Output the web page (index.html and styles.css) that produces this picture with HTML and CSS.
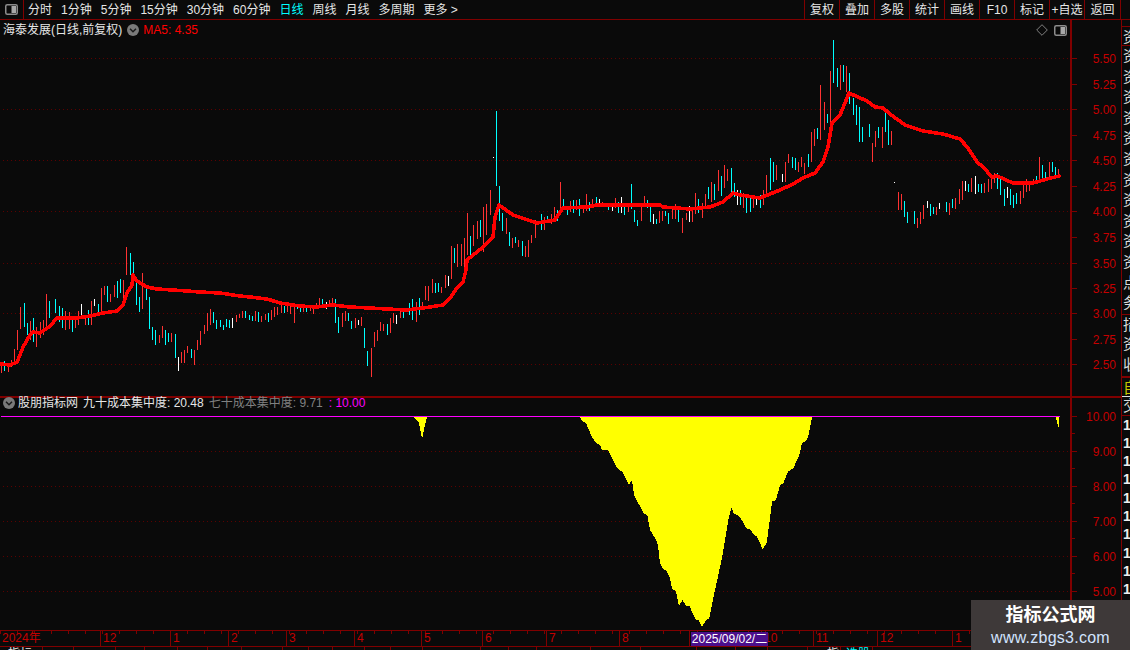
FILE: index.html
```html
<!DOCTYPE html>
<html lang="zh-CN">
<head>
<meta charset="utf-8">
<title>海泰发展</title>
<link rel="stylesheet" href="styles.css">
</head>
<body>
<div class="app">
  <header class="toolbar">
    <div class="layout-btn">
      <svg class="panel-icon" width="13" height="11" viewBox="0 0 13 11"><rect x=".75" y=".75" width="11.5" height="9.5" rx="1.5" class="pi-box"/><rect x="6.5" y="2" width="4.5" height="7" class="pi-fill"/></svg>
    </div>
    <nav class="periods">
      <span>分时</span><span>1分钟</span><span>5分钟</span><span>15分钟</span><span>30分钟</span><span>60分钟</span><span class="active">日线</span><span>周线</span><span>月线</span><span>多周期</span><span>更多 &gt;</span>
    </nav>
    <div class="actions">
      <span>复权</span><span>叠加</span><span>多股</span><span>统计</span><span>画线</span><span>F10</span><span>标记</span><span>+自选</span><span class="wide">返回</span>
    </div>
  </header>

  <div class="workspace">
    <main class="charts">
      <section class="pane pane-price">
        <div class="legend">
          <span class="name">海泰发展(日线,前复权)</span>
          <svg class="chev" width="12" height="12" viewBox="0 0 12 12"><circle cx="6" cy="6" r="6" class="chev-bg"/><path d="M3 4.8l3 3 3-3" class="chev-line"/></svg>
          <span class="ma">MA5: 4.35</span>
        </div>
        <div class="pane-tools">
          <svg width="12" height="12" viewBox="0 0 12 12"><path d="M6 .7L11.3 6 6 11.3.7 6z" class="diamond"/></svg>
          <svg class="panel-icon" width="13" height="11" viewBox="0 0 13 11"><rect x=".75" y=".75" width="11.5" height="9.5" rx="1.5" class="pi-box"/><rect x="6.5" y="2" width="4.5" height="7" class="pi-fill"/></svg>
        </div>
        <svg class="plot" width="1121" height="376" viewBox="0 20 1121 376">
          <path class="grid" d="M3 58.5H1068M3 109.5H1068M3 160.5H1068M3 211.5H1068M3 263.5H1068M3 313.5H1068M3 364.5H1068"/>
          <g transform="translate(0 240) scale(.33333)">
            <path class="c-red" d="M4 365V400M25 368V395M35 360V382M44 328V368M52 270V330M61 202V268M91 243V300M109 262V322M122 247V295M130 240V285M139 162V257M196 213V270M208 215V268M226 235V265M236 212V255M256 232V255M274 182V255M304 145V213M313 138V165M331 162V185M343 135V170M370 120V180M379 22V105M427 98V206M478 285V308M487 258V295M514 278V305M545 335V370M553 330V368M562 318V340M583 330V375M592 300V330M602 272V315M613 255V282M622 220V272M631 208V255M709 225V245M718 222V232"/>
            <path class="c-cyan" d="M13 363V392M73 190V260M82 250V285M100 235V305M149 183V235M168 178V220M178 198V245M187 205V263M217 228V275M265 210V255M295 192V225M322 138V185M352 122V175M361 118V160M391 40V105M400 67V120M409 130V195M418 170V215M439 143V180M448 172V267M457 262V300M466 270V315M496 270V315M505 280V305M526 282V355M574 328V353M640 216V250M649 240V267M661 240V260M671 255V270M680 238V262M688 240V263"/>
            <path class="c-white" d="M244 193V228M283 178V198M535 352V392M697 235V263"/>
          </g>
          <g transform="translate(230 270) scale(.33333)">
            <path class="c-red" d="M19 135V155M28 133V145M37 123V145M76 123V152M94 138V155M106 132V150M124 120V150M133 112V140M142 110V135M154 100V130M172 97V125M181 108V132M193 105V158M220 108V125M241 110V122M250 105V132M259 100V110M268 85V108M298 90V110M307 85V100M337 128V170M346 123V152M376 143V173M394 140V167M424 235V320M433 185V230M442 180V212M451 155V183M460 162V183M481 145V188M490 130V160M511 122V143M559 95V155M577 95V115M586 48V90M595 48V92M607 27V68M634 52V68M646 15V55M664 0V28"/>
            <path class="c-cyan" d="M46 123V143M58 135V150M67 138V152M85 127V155M115 130V155M163 108V128M202 102V118M211 102V125M229 115V125M277 87V108M316 87V158M325 140V188M355 130V152M364 152V176M403 175V233M412 243V287M472 162V194M520 122V145M538 98V135M547 87V150M568 83V135M616 40V68M625 40V65"/>
            <path class="c-white" d="M7 145V173M289 97V117M385 150V165M499 135V162M655 18V48"/>
          </g>
          <g transform="translate(440 100) scale(.33333)">
            <path class="c-red" d="M34 438V510M52 432V500M64 432V498M73 415V510M82 340V465M100 375V438M112 362V418M130 320V455M139 312V405M151 270V345M199 355V403M217 413V443M235 420V440M256 437V470M265 420V472M274 405V430M286 360V415M313 350V390M334 342V372M343 322V355M361 247V327M391 303V335M409 300V330M430 320V338M439 282V332M457 298V325M487 307V322M526 293V325M565 320V335M604 322V362M613 288V312M660 333V370M669 332V362M699 322V358M708 312V358M727 355V400M739 340V360M757 330V365M766 280V343M787 310V353M796 283V325M814 245V305M835 210V273M853 195V263M862 207V243"/>
            <path class="c-cyan" d="M43 445V488M91 408V465M121 360V412M169 33V258M178 258V362M187 340V392M208 397V438M226 410V430M247 423V468M304 343V390M322 348V368M352 330V362M370 297V330M382 318V345M400 300V340M418 298V347M448 307V333M469 292V312M505 320V330M535 305V338M553 318V345M574 252V327M583 330V365M592 360V378M622 300V325M631 320V366M651 357V372M678 333V348M687 340V372M717 330V365M775 297V340M805 262V297M823 252V300M844 228V288M874 205V280M883 250V290"/>
            <path class="c-white" d="M160 171V174M478 297V312M517 320V333M544 291V338M640 342V372M748 318V366M892 270V315"/>
          </g>
          <path class="c-red-1" d="M743.5 193V208M753.5 195V208M763.5 190V205M766.5 175V195M776.5 165V180"/>
          <path class="c-cyan-1" d="M740.5 190V205M746.5 195V213M750.5 196V212M760.5 195V208M770.5 158V190M773.5 162V182"/>
          <path class="c-white-1" d="M756.5 197V205"/>
          <g transform="translate(780 30) scale(.33333)">
            <path class="c-red" d="M16 397V455M25 373V400M55 395V425M64 380V412M73 400V432M94 307V395M103 297V348M121 165V330M133 217V300M151 123V290M181 105V180M199 108V185M277 340V395M286 304V352M307 292V355M334 303V345M355 487V540M364 492V540M412 565V595M421 545V582M430 525V568M469 530V555M508 520V555M526 505V538M538 477V522M547 453V510M574 445V485M613 460V488M625 447V485M634 445V478M643 430V460M721 483V522M730 462V505M739 448V485M748 455V482M760 448V465M778 382V450M808 395V445M835 417V435"/>
            <path class="c-cyan" d="M37 382V415M46 385V420M85 372V412M112 295V328M142 252V280M160 30V160M172 115V172M190 105V155M208 128V222M220 205V255M229 225V285M238 232V335M247 290V335M268 282V322M295 292V325M316 250V305M325 270V345M373 513V562M382 546V578M403 543V582M451 522V557M460 532V552M499 515V545M517 507V535M565 462V485M595 462V485M604 462V488M652 430V478M661 442V495M673 477V528M691 478V525M700 495V535M709 488V523M769 438V455M787 405V450M796 425V445M817 395V425M826 410V435"/>
            <path class="c-white" d="M7 432V455M343 457V460M442 512V535M478 518V538M556 453V482M586 438V492M682 470V505"/>
          </g>
          <polyline class="ma-line" points="1,364 10,365 17,362 20,355 23,347 30,335 33,332 40,333 50,326 57,318 67,318 77,318 90,316 103,313 117,311 123,305 127,293 132,285 133,275 137,281 147,287 157,289 173,290 200,292 220,293 240,296 250,297 267,299 280,303 300,306 317,307 333,305 350,307 370,308 387,309 407,310 423,308 443,305 450,298 457,288 463,282 466,270 467,260 482,248 493,237 495,217 499,205 513,215 537,223 555,220 563,208 587,207 597,205 660,205 663,207 690,209 710,207 723,202 733,193 740,195 760,198 780,190 793,184 803,178 815,173 823,162 828,147 832,123 840,115 845,103 849,93 867,101 875,107 883,108 890,114 905,125 923,131 943,134 960,139 968,148 977,162 983,167 992,177 997,176 1013,183 1033,183 1047,179 1059,176"/>
          <rect class="axis" x="1070" y="20" width="2" height="376"/>
          <path class="tick" d="M1072 58.5H1077M1072 84.5H1077M1072 109.5H1077M1072 135.5H1077M1072 160.5H1077M1072 186.5H1077M1072 211.5H1077M1072 237.5H1077M1072 263.5H1077M1072 288.5H1077M1072 313.5H1077M1072 339.5H1077M1072 364.5H1077"/>
          <g class="ax-labels">
            <text x="1116" y="63">5.50</text><text x="1116" y="89">5.25</text><text x="1116" y="114">5.00</text><text x="1116" y="140">4.75</text><text x="1116" y="165">4.50</text><text x="1116" y="191">4.25</text><text x="1116" y="216">4.00</text><text x="1116" y="242">3.75</text><text x="1116" y="268">3.50</text><text x="1116" y="293">3.25</text><text x="1116" y="318">3.00</text><text x="1116" y="344">2.75</text><text x="1116" y="369">2.50</text>
          </g>
        </svg>
      </section>

      <section class="pane pane-ind">
        <div class="legend legend-ind">
          <svg class="chev" width="12" height="12" viewBox="0 0 12 12"><circle cx="6" cy="6" r="6" class="chev-bg"/><path d="M3 4.8l3 3 3-3" class="chev-line"/></svg>
          <span class="name">股朋指标网</span>
          <span class="name">九十成本集中度: 20.48</span>
          <span class="grey">七十成本集中度: 9.71</span>
          <span class="magenta">: 10.00</span>
        </div>
        <svg class="plot" width="1121" height="232" viewBox="0 398 1121 232">
          <path class="grid" d="M3 451.5H1068M3 486.5H1068M3 521.5H1068M3 556.5H1068M3 591.5H1068"/>
          <polygon class="area" points="413,417 419,423 422,439 425,425 427,417"/>
          <polygon class="area" points="1056,417 1059,417 1059,428 1057,423"/>
          <g transform="translate(570 405) scale(.33333)">
            <polygon class="area" points="30,36 36,48 48,54 66,96 78,114 90,120 96,135 114,135 138,183 150,198 156,198 177,240 186,225 192,270 222,327 232,330 240,375 260,408 264,420 270,475 282,495 288,495 300,520 306,550 318,560 327,603 338,585 348,603 358,603 378,645 386,645 396,666 408,645 418,640 436,550 456,460 474,350 484,308 492,327 504,330 520,352 528,370 540,372 552,390 560,394 578,432 590,414 600,340 606,290 618,285 630,240 640,235 654,200 670,190 688,150 696,114 708,108 716,90 726,36"/>
          </g>
          <rect class="limit" x="1" y="416" width="1059" height="1"/>
          <rect class="axis" x="1070" y="398" width="2" height="232"/>
          <path class="tick" d="M1072 416.5H1077M1072 433.5H1075M1072 451.5H1077M1072 468.5H1075M1072 486.5H1077M1072 503.5H1075M1072 521.5H1077M1072 538.5H1075M1072 556.5H1077M1072 573.5H1075M1072 591.5H1077M1072 608.5H1075"/>
          <g class="ax-labels">
            <text x="1116" y="421">10.00</text><text x="1116" y="456">9.00</text><text x="1116" y="491">8.00</text><text x="1116" y="526">7.00</text><text x="1116" y="561">6.00</text><text x="1116" y="596">5.00</text>
          </g>
        </svg>
      </section>

      <div class="time-axis">
        <span>2024年</span><span>12</span><span>1</span><span>2</span><span>3</span><span>4</span><span>5</span><span>6</span><span>7</span><span>8</span><span></span><span>10</span><span>11</span><span>12</span><span>1</span><span>2</span>
        <div class="crosshair-date">2025/09/02/二</div>
      </div>
    </main>

    <aside class="side">
      <div class="side-spacer"></div>
      <div class="side-row boxed">资</div>
      <div class="side-row">资</div><div class="side-row">资</div><div class="side-row">资</div><div class="side-row">资</div><div class="side-row">资</div><div class="side-row">资</div><div class="side-row">资</div><div class="side-row">资</div><div class="side-row">资</div><div class="side-row">资</div><div class="side-row">资</div>
      <div class="side-row">点</div><div class="side-row">务</div>
      <div class="side-row sep">招</div><div class="side-row">资</div><div class="side-row">收</div>
      <div class="side-self">自</div>
      <div class="side-box">交</div>
      <div class="side-num">1</div><div class="side-num">1</div><div class="side-num">1</div><div class="side-num">1</div><div class="side-num">1</div><div class="side-num">1</div><div class="side-num">1</div><div class="side-num">1</div><div class="side-num">1</div><div class="side-num">1</div>
    </aside>
  </div>

  <footer class="tabs">
    <span class="tab">指标</span><span class="tab"></span><span class="tab"></span><span class="tab"></span><span class="tab"></span><span class="tab"></span><span class="tab"></span><span class="tab"></span><span class="tab"></span><span class="tab"></span><span class="tab"></span><span class="tab"></span><span class="tab"></span><span class="tab"></span><span class="tab"></span><span class="tab"></span><span class="tab"></span><span class="tab"></span><span class="tab"></span><span class="tab"></span><span class="tab"></span><span class="tab"></span><span class="tab tab-far">指</span><span class="tab tab-cyan">选股</span><span class="tab"></span>
  </footer>

  <aside class="watermark">
    <strong>指标公式网</strong>
    <span>www.zbgs3.com</span>
  </aside>
</div>
</body>
</html>
```
FILE: styles.css
```css
* { box-sizing: border-box; margin: 0; padding: 0; }
html, body { width: 1130px; height: 650px; overflow: hidden; background: #0a0a0a; }
body { font: 12px/1 "Liberation Sans", "Noto Sans CJK SC", sans-serif; color: #e6e6e6; }

.app { position: relative; width: 1130px; height: 650px; display: flex; flex-direction: column; overflow: hidden; }

/* toolbar */
.toolbar { flex: none; height: 20px; display: flex; border-bottom: 1px solid #800000; }
.layout-btn { width: 24px; display: flex; align-items: center; justify-content: center; border-right: 1px solid #800000; }
.periods { display: flex; align-items: center; gap: 9px; padding-left: 4px; flex: 1; white-space: nowrap; }
.periods .active { color: #00ffff; }
.actions { display: flex; margin-right: 9px; }
.actions span { width: 35px; display: flex; align-items: center; justify-content: center; border-left: 1px solid #800000; white-space: nowrap; }
.actions .wide { width: 37px; border-right: 1px solid #800000; }

.pi-box { fill: none; stroke: #8c8c8c; stroke-width: 1.5; }
.pi-fill { fill: #a8a8a8; }

/* workspace */
.workspace { flex: none; height: 627px; display: flex; }
.charts { position: relative; width: 1121px; flex: none; display: flex; flex-direction: column; }

.pane { position: relative; }
.pane-price { height: 378px; border-bottom: 2px solid #800000; }
.pane-ind { height: 232px; }
.plot { display: block; }

.legend { position: absolute; left: 3px; top: 3px; display: flex; align-items: center; height: 14px; white-space: nowrap; z-index: 1; }
.legend .chev { margin: 0 4px 0 5px; }
.legend .ma { color: #ff0000; }
.legend-ind { top: -2px; }
.legend-ind .chev { margin: 0 3px 0 0; }
.legend-ind .name { margin-right: 5px; }
.legend-ind .grey { color: #808080; margin-right: 6px; }
.legend-ind .magenta { color: #ff00ff; }
.chev-bg { fill: #7a7a7a; }
.chev-line { fill: none; stroke: #1a1a1a; stroke-width: 1.5; }

.pane-tools { position: absolute; right: 54px; top: 4px; display: flex; align-items: center; gap: 6px; z-index: 1; }
.diamond { fill: none; stroke: #808080; }

/* plot marks */
.grid { fill: none; stroke: #5c0000; stroke-dasharray: 1 3; }
.c-red, .c-cyan, .c-white { fill: none; stroke-width: 3; shape-rendering: crispEdges; }
.c-red-1, .c-cyan-1, .c-white-1 { fill: none; stroke-width: 1; shape-rendering: crispEdges; }
.c-red, .c-red-1 { stroke: #ff3232; }
.c-cyan, .c-cyan-1 { stroke: #00ffff; }
.c-white, .c-white-1 { stroke: #ffffff; }
.ma-line { fill: none; stroke: #ff0000; stroke-width: 3.6; stroke-linejoin: round; stroke-linecap: round; shape-rendering: crispEdges; }
.area { fill: #ffff00; shape-rendering: crispEdges; }
.limit { fill: #ff00ff; }
.axis { fill: #800000; }
.tick { fill: none; stroke: #800000; }
.ax-labels text { fill: #c40000; font-size: 12px; text-anchor: end; }

/* time axis */
.time-axis {
  position: relative;
  height: 17px;
  display: grid;
  grid-template-columns: 100px 70px 58px 58px 68px 67px 61px 64px 73px 70px 72px 52px 64px 75px 70px 1fr;
  border-top: 1px solid #800000;
  border-bottom: 1px solid #800000;
  background: repeating-linear-gradient(90deg, #800000 0 1px, transparent 1px 17px) no-repeat 0 0 / 100% 3px;
  color: #c40000;
}
.time-axis span { padding-left: 2px; line-height: 15px; border-left: 1px solid #800000; white-space: nowrap; }
.time-axis span:first-child { border-left: 0; }
.crosshair-date { position: absolute; left: 691px; top: 1px; width: 77px; height: 14px; background: #4b0f8c; color: #fff; line-height: 14px; text-align: center; white-space: nowrap; overflow: hidden; }

/* side */
.side { width: 9px; flex: none; display: flex; flex-direction: column; overflow: hidden; border-left: 1px solid #800000; color: #dcdcdc; white-space: nowrap; }
.side-spacer { height: 6px; flex: none; }
.side-row { height: 20.6px; flex: none; font-size: 15px; line-height: 20px; padding-left: 1px; }
.side-row.boxed { height: 20px; border-top: 1px solid #800000; border-bottom: 1px solid #800000; }
.side-row.sep { border-top: 1px solid #800000; }
.side-self { flex: none; height: 20px; font-size: 15px; line-height: 20px; color: #c8c800; border-top: 2px solid #800000; padding-left: 1px; }
.side-box { flex: none; height: 20px; font-size: 15px; line-height: 18px; border-top: 1px solid #e0e0e0; border-bottom: 1px solid #800000; padding-left: 1px; }
.side-num { flex: none; height: 18.3px; font-size: 14px; font-weight: 700; line-height: 18px; color: #eee; padding-left: 1px; }

/* bottom tabs */
.tabs {
  flex: none;
  height: 3px;
  display: grid;
  grid-template-columns: 42px 31px 42px 29px 33px 30px 34px 41px 26px 24px 32px 26px 32px 58px 28px 28px 54px 50px 56px 39px 32px 40px 33px 32px 1fr;
  overflow: hidden;
}
.tab { border-left: 1px solid #800000; line-height: 14px; padding-left: 8px; white-space: nowrap; overflow: hidden; }
.tab:first-child { border-left: 0; }
.tab-far { padding-left: 19px; }
.tab-cyan { padding-left: 5px; color: #00ffff; }

/* watermark */
.watermark { position: absolute; left: 971px; top: 600px; width: 159px; height: 50px; background: #3e3939; display: flex; flex-direction: column; align-items: center; z-index: 2; }
.watermark strong { font-size: 18px; line-height: 18px; margin-top: 6px; color: #fff; }
.watermark span { font-size: 16px; line-height: 16px; margin-top: 6px; color: #d2e4ff; white-space: nowrap; letter-spacing: .25px; }
```
